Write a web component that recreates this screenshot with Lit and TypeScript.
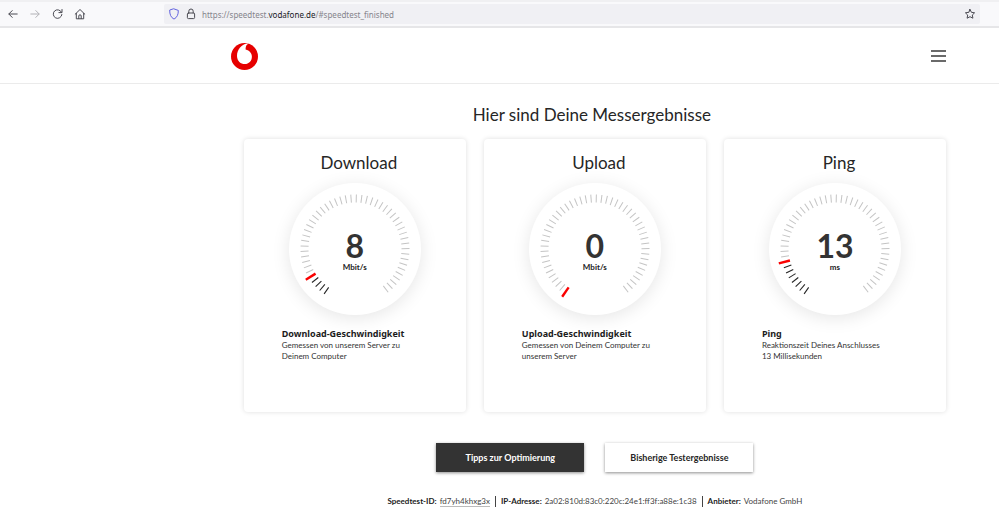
import { LitElement, html, css, svg } from "lit";
import { customElement, property } from "lit/decorators.js";

const TICKS = 50;
const START = 34.5;
const STEP = 288 / (TICKS - 1);

@customElement("speed-dial")
class SpeedDial extends LitElement {
  @property({ type: String }) value = "0";
  @property({ type: String }) unit = "";
  @property({ type: Number }) level = 0;

  static styles = css`
    :host { display: block; width: 132px; height: 132px; }
    .dial {
      display: grid; width: 132px; height: 132px; border-radius: 50%;
      background: #fff; box-shadow: 0 3px 18px rgba(0, 0, 0, 0.1);
    }
    .scale, .reading { grid-area: 1 / 1; }
    .off { stroke: #c4c4c4; stroke-width: 1; }
    .on { stroke: #262626; stroke-width: 1.1; }
    .needle { stroke: #fa0000; stroke-width: 2.4; }
    .reading {
      display: flex; flex-direction: column; align-items: center;
      padding-top: 45px; color: #333; font-weight: 700;
    }
    .number { font-size: 32px; line-height: 35px; }
    .unit { font-size: 8px; line-height: 8px; color: #222; }
  `;

  render() {
    const ticks = Array.from({ length: TICKS }, (_, i) => {
      const kind = i < this.level ? "on" : i === this.level ? "needle" : "off";
      return svg`<line class=${kind} x1="0" x2="0" y1="46.5" y2=${kind === "needle" ? 58 : 54.5}
        transform="rotate(${START + i * STEP})"></line>`;
    });
    return html`<div class="dial">
      <svg class="scale" width="132" height="132" viewBox="-66 -66 132 132" aria-hidden="true">${ticks}</svg>
      <div class="reading"><span class="number">${this.value}</span><span class="unit">${this.unit}</span></div>
    </div>`;
  }
}

@customElement("browser-bar")
class BrowserBar extends LitElement {
  static styles = css`
    :host { display: block; }
    .bar {
      display: flex; align-items: center; height: 24px; padding: 0 19px 0 7px;
      background: #f9f9fb; border-top: 2px solid #f0f0f2; border-bottom: 2px solid #e6e6e8;
    }
    .nav { display: flex; gap: 10px; width: 157px; }
    button { display: block; padding: 0; border: 0; background: none; line-height: 0; }
    .faded { opacity: 0.4; }
    svg { display: block; fill: none; stroke: #4a4a52; stroke-width: 1; stroke-linecap: round; stroke-linejoin: round; }
    .shield { stroke: #6464e0; }
    .address {
      flex: 1; display: flex; align-items: center; gap: 6px; height: 20px; padding: 0 4px;
      background: #f0f0f4; border-radius: 2px;
    }
    .url { flex: 1; padding-top: 2px; font: 8px/12px "Noto Sans", sans-serif; color: #85858c; text-decoration: none; }
    .host { color: #18181e; }
  `;

  render() {
    return html`<div class="bar">
      <nav class="nav">
        <button aria-label="Zurück"><svg width="12" height="12" viewBox="0 0 12 12"><path d="M10.2 6H2M5.2 2.6 1.8 6l3.4 3.4"/></svg></button>
        <button class="faded" aria-label="Vor"><svg width="12" height="12" viewBox="0 0 12 12"><path d="M1.8 6H10M6.8 2.6 10.2 6 6.8 9.4"/></svg></button>
        <button aria-label="Neu laden"><svg width="13" height="12" viewBox="0 0 13 12"><path d="M10.5 4.2A4.3 4.3 0 1 0 10.9 6.5M11 1.5v3.1H7.9"/></svg></button>
        <button aria-label="Startseite"><svg width="12" height="12" viewBox="0 0 12 12"><path d="M1.2 6.2 6 1.5 10.8 6.2M2.3 5.4v5.400h7.400V5.400M4.800 10.600V8a1.200 1.200 0 0 1 2.400 0v2.600"/></svg></button>
      </nav>
      <div class="address">
        <svg class="shield" width="12" height="12" viewBox="0 0 12 12"><path d="M6 .9 10.3 2.4C10.4 6.4 9.2 9.4 6 11.1 2.8 9.4 1.6 6.4 1.7 2.4Z"/></svg>
        <svg width="10" height="12" viewBox="0 0 10 12"><rect x="1.4" y="5" width="7.2" height="5.6" rx="1"/><path d="M2.8 5V3.2a2.2 2.2 0 0 1 4.4 0V5"/></svg>
        <a class="url" href="#speedtest_finished">https://speedtest.<span class="host">vodafone.de</span>/#speedtest_finished</a>
        <button aria-label="Lesezeichen"><svg width="12" height="12" viewBox="0 0 12 12"><path d="m6 1.4 1.4 2.9 3.2.5-2.3 2.2.6 3.2L6 8.700l-2.900 1.500.6-3.200L1.400 4.800l3.200-.5Z"/></svg></button>
      </div>
    </div>`;
  }
}

const cards = [
  { title: "Download", value: "8", unit: "Mbit/s", level: 4, head: "Download-Geschwindigkeit", text: ["Gemessen von unserem Server zu Deinem Computer"] },
  { title: "Upload", value: "0", unit: "Mbit/s", level: 0, head: "Upload-Geschwindigkeit", text: ["Gemessen von Deinem Computer zu unserem Server"] },
  { title: "Ping", value: "13", unit: "ms", level: 7, head: "Ping", text: ["Reaktionszeit Deines Anschlusses", "13 Millisekunden"] },
];

@customElement("app-root")
class AppRoot extends LitElement {
  static styles = css`
    :host { display: block; min-height: 100vh; background: #fff; color: #262626; font-family: Lato, "Noto Sans", sans-serif; }
    .top {
      display: flex; align-items: center; justify-content: space-between;
      height: 55px; padding: 0 53px 0 23.1%; border-bottom: 1px solid #ebebeb;
    }
    .logo, .menu { display: block; line-height: 0; }
    .logo { padding-top: 2px; }
    .menu { padding: 0; border: 0; background: none; }
    main { padding: 0 53px 0 24.4%; }
    h1, h2, h3, p, dl, dd { margin: 0; font-weight: 400; }
    h1, h2 { font-size: 17px; line-height: 24px; }
    h1 { padding: 19px 6px 12px 0; text-align: center; }
    h2 { padding-left: 8px; }
    .cards { display: grid; grid-template-columns: repeat(3, 1fr); gap: 18px; }
    .card {
      display: flex; flex-direction: column; align-items: center; box-sizing: border-box;
      min-height: 273px; padding: 12px 36px; border-radius: 4px;
      background: #fff; box-shadow: 0 0 5px rgba(0, 0, 0, 0.13);
    }
    speed-dial { margin: 8px 0 12px; }
    .note { align-self: stretch; padding-left: 2px; }
    h3 { font: 700 9px/13px "Noto Sans", sans-serif; color: #1c1c1c; white-space: nowrap; }
    p { max-width: 136px; font-size: 8px; line-height: 11px; color: #333; }
    .actions { display: flex; justify-content: center; gap: 21px; padding: 31px 0 24px; }
    .action {
      width: 148px; height: 29px; padding: 0; border: 0; background: #fff; color: #262626;
      font: 700 9px/12px Lato, sans-serif; box-shadow: 0 1px 3px rgba(0, 0, 0, 0.45);
    }
    .dark { background: #333; color: #fff; }
    .facts { display: flex; justify-content: center; font-size: 8px; line-height: 11px; }
    .fact { display: flex; gap: 3px; padding: 0 5px; border-left: 1px solid #444; }
    .fact:first-child { border-left: 0; }
    dt { font-weight: 700; color: #1c1c1c; }
    dd { color: #444; }
    .id { display: block; color: inherit; text-decoration: none; line-height: 10px; border-bottom: 1px solid #bbb; }
  `;

  render() {
    return html`
      <browser-bar></browser-bar>
      <header class="top">
        <a class="logo" href="#" aria-label="Vodafone">
          <svg width="27" height="27" viewBox="0 0 27 27">
            <circle cx="13.5" cy="13.5" r="13.5" fill="#e60000"/>
            <path fill="#fff" d="M13.8 21.1c-4.1 0-7.7-3.2-7.8-8.2C6 7 10.3 1.7 16 .6c.7-.1 1.5-.1 1.9 0-2 .5-3.3 2.7-3.3 5.2v.6c4 1 6.3 3.7 6.3 7.4 0 4.300-3.100 7.300-7.100 7.300Z"/>
          </svg>
        </a>
        <button class="menu" aria-label="Menü">
          <svg width="15" height="12" viewBox="0 0 15 12" fill="none" stroke="#3a3a3a" stroke-width="1.6"><path d="M0 1h15M0 6h15M0 11h15"/></svg>
        </button>
      </header>
      <main>
        <h1>Hier sind Deine Messergebnisse</h1>
        <section class="cards">
          ${cards.map((c) => html`<article class="card">
            <h2>${c.title}</h2>
            <speed-dial .value=${c.value} .unit=${c.unit} .level=${c.level}></speed-dial>
            <div class="note"><h3>${c.head}</h3>${c.text.map((t) => html`<p>${t}</p>`)}</div>
          </article>`)}
        </section>
        <div class="actions">
          <button class="action dark">Tipps zur Optimierung</button>
          <button class="action">Bisherige Testergebnisse</button>
        </div>
        <dl class="facts">
          <div class="fact"><dt>Speedtest-ID:</dt><dd><a class="id" href="#">fd7yh4khxg3x</a></dd></div>
          <div class="fact"><dt>IP-Adresse:</dt><dd>2a02:810d:83c0:220c:24e1:ff3f:a88e:1c38</dd></div>
          <div class="fact"><dt>Anbieter:</dt><dd>Vodafone GmbH</dd></div>
        </dl>
      </main>`;
  }
}
